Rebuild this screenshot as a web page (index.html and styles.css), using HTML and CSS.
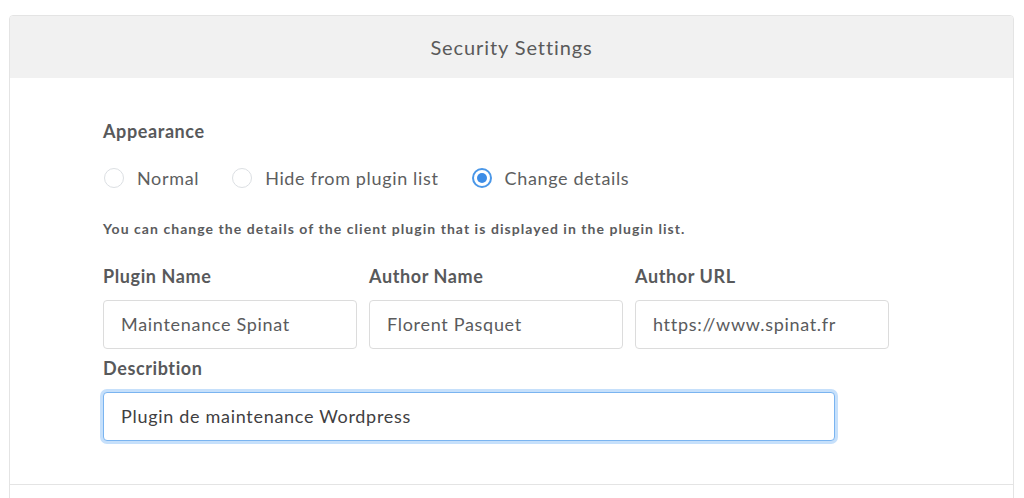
FILE: index.html
```html
<!DOCTYPE html>
<html lang="en">
<head>
<meta charset="utf-8">
<title>Security Settings</title>
<link rel="stylesheet" href="styles.css">
</head>
<body>
<div class="panel">
  <div class="panel-header">Security Settings</div>
  <div class="panel-body">
    <div class="section-title">Appearance</div>
    <div class="radios">
      <label class="radio"><span class="dot"></span>Normal</label>
      <label class="radio"><span class="dot"></span>Hide from plugin list</label>
      <label class="radio checked"><span class="dot"></span>Change details</label>
    </div>
    <p class="help">You can change the details of the client plugin that is displayed in the plugin list.</p>
    <div class="fields">
      <div class="field">
        <div class="label">Plugin Name</div>
        <div class="input">Maintenance Spinat</div>
      </div>
      <div class="field">
        <div class="label">Author Name</div>
        <div class="input">Florent Pasquet</div>
      </div>
      <div class="field">
        <div class="label">Author URL</div>
        <div class="input">https://www.spinat.fr</div>
      </div>
    </div>
    <div class="field wide">
      <div class="label">Describtion</div>
      <div class="input focused">Plugin de maintenance Wordpress</div>
    </div>
  </div>
  <div class="panel-footer"></div>
</div>
</body>
</html>
```
FILE: styles.css
```css
html, body {
  margin: 0;
  padding: 0;
  background: #ffffff;
}
body {
  font-family: Lato, "Open Sans", "Liberation Sans", sans-serif;
  color: #58595b;
  padding: 15px 10px 0 9px;
}
.panel {
  border: 1px solid #e4e4e4;
  border-radius: 4px 4px 0 0;
  background: #fff;
}
.panel-header {
  background: #f1f1f1;
  height: 62px;
  line-height: 62px;
  text-align: center;
  font-size: 20px;
  letter-spacing: 0.9px;
  color: #5a5a5a;
  border-radius: 3px 3px 0 0;
}
.panel-body {
  padding: 41px 0 43px 93px;
}
.section-title {
  font-size: 18px;
  font-weight: 700;
  line-height: 24px;
  letter-spacing: 0.6px;
  color: #58595b;
}
.radios {
  display: flex;
  margin-top: 23px;
  font-size: 18px;
  line-height: 24px;
  letter-spacing: 0.65px;
}
.radio {
  display: flex;
  align-items: center;
  color: #5d5e60;
  margin-right: 32px;
}
.radio .dot {
  width: 20px;
  height: 20px;
  border: 1.5px solid #dcdfe3;
  border-radius: 50%;
  box-sizing: border-box;
  margin: 0 13px 0 1px;
  position: relative;
  background: #fff;
}
.radio.checked .dot {
  border: 2px solid #4a97e8;
}
.radio.checked .dot::after {
  content: "";
  position: absolute;
  left: 3px;
  top: 3px;
  width: 10px;
  height: 10px;
  border-radius: 50%;
  background: #3c8ce6;
}
.help {
  margin: 29px 0 0;
  font-size: 14px;
  line-height: 20px;
  font-weight: 700;
  letter-spacing: 1.05px;
  color: #5a5b5d;
}
.fields {
  display: grid;
  grid-template-columns: 254px 254px 254px;
  column-gap: 12px;
  margin-top: 25px;
}
.field .label {
  font-size: 18px;
  line-height: 24px;
  font-weight: 700;
  letter-spacing: 0.6px;
  color: #58595b;
  margin-bottom: 12px;
}
.input {
  box-sizing: border-box;
  height: 49px;
  border: 1px solid #dcdcdc;
  border-radius: 4px;
  padding: 0 17px;
  font-size: 18px;
  line-height: 47px;
  letter-spacing: 0.7px;
  color: #5a5b5d;
  background: #fff;
}
.field.wide {
  margin-top: 7px;
  width: 732px;
}
.input.focused {
  border: 1.5px solid #7ab4f0;
  box-shadow: 0 0 0 3px #c6e0fb;
  color: #3f4042;
  line-height: 46px;
}
.panel-footer {
  border-top: 1px solid #e4e4e4;
  height: 40px;
}
```
